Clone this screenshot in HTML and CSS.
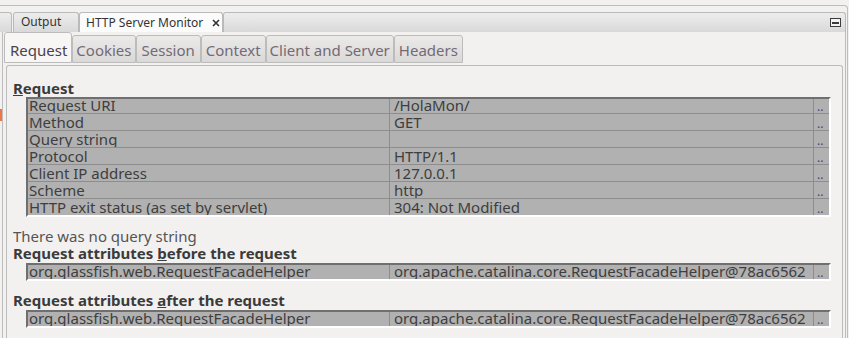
FILE: index.html
```html
<!DOCTYPE html>
<html lang="en">
<head>
  <meta charset="UTF-8">
  <meta name="viewport" content="width=device-width, initial-scale=1.0">
  <title>HTTP Server Monitor</title>
  <link rel="stylesheet" href="styles.css">
</head>
<body>

  <div class="frame">

    <!-- editor tab strip -->
    <div class="editor-tabs">
      <div class="etab stub"></div>
      <div class="etab output">Output</div>
      <div class="etab active">
        HTTP Server Monitor
        <svg class="close" width="8" height="8" viewBox="0 0 8 8">
          <path d="M1 1 L7 7 M7 1 L1 7" stroke="#333" stroke-width="1.6" fill="none"/>
        </svg>
      </div>
      <div class="etab-fill">
        <svg class="minimize" width="11" height="9" viewBox="0 0 11 9">
          <rect x="0.5" y="0.5" width="10" height="8" fill="#f4f4f4" stroke="#3b3b3b"/>
          <rect x="2" y="4" width="7" height="2" fill="#3b3b3b"/>
        </svg>
      </div>
    </div>

    <div class="workspace">
      <div class="gutter"><span class="mark"></span></div>

      <div class="editor-body">
        <!-- monitor tabs -->
        <div class="subtabs">
          <div class="subtab active">Request</div>
          <div class="subtab narrow">Cookies</div>
          <div class="subtab wide">Session</div>
          <div class="subtab">Context</div>
          <div class="subtab narrow">Client and Server</div>
          <div class="subtab">Headers</div>
        </div>

        <div class="subpanel">
          <div class="section-title"><u>R</u>equest</div>
          <div class="grid">
            <div class="row"><div class="cell">Request URI</div><div class="cell">/HolaMon/</div><div class="more">..</div></div>
            <div class="row"><div class="cell">Method</div><div class="cell">GET</div><div class="more">..</div></div>
            <div class="row"><div class="cell">Query string</div><div class="cell"></div><div class="more">..</div></div>
            <div class="row"><div class="cell">Protocol</div><div class="cell">HTTP/1.1</div><div class="more">..</div></div>
            <div class="row"><div class="cell">Client IP address</div><div class="cell">127.0.0.1</div><div class="more">..</div></div>
            <div class="row"><div class="cell">Scheme</div><div class="cell">http</div><div class="more">..</div></div>
            <div class="row"><div class="cell">HTTP exit status (as set by servlet)</div><div class="cell">304: Not Modified</div><div class="more">..</div></div>
          </div>

          <p class="note">There was no query string</p>

          <div class="section-title">Request attributes <u>b</u>efore the request</div>
          <div class="grid">
            <div class="row"><div class="cell">org.glassfish.web.RequestFacadeHelper</div><div class="cell">org.apache.catalina.core.RequestFacadeHelper@78ac6562</div><div class="more">..</div></div>
          </div>

          <div class="section-title">Request attributes <u>a</u>fter the request</div>
          <div class="grid">
            <div class="row"><div class="cell">org.glassfish.web.RequestFacadeHelper</div><div class="cell">org.apache.catalina.core.RequestFacadeHelper@78ac6562</div><div class="more">..</div></div>
          </div>
        </div>
      </div>
    </div>

  </div>

</body>
</html>
```

FILE: styles.css
```css
body, html {
  margin: 0;
  height: 100%;
  overflow: hidden;
  background: #f2f1f0;
  font-family: "Noto Sans", sans-serif;
  color: #4c4c4c;
}

.frame {
  box-sizing: border-box;
  height: calc(100% - 5px);
  margin-top: 5px;
  margin-right: 1px;
  padding-top: 6px;
  border-top: 1px solid #bdbdbd;
  border-right: 1px solid #bdbdbd;
  border-top-right-radius: 4px;
  display: flex;
  flex-direction: column;
}

/* editor tab strip */
.editor-tabs {
  display: flex;
  height: 20px;
  margin-right: 1px;
}

.etab {
  box-sizing: border-box;
  height: 20px;
  border: 1px solid #bababa;
  border-bottom: none;
  border-radius: 3px 3px 0 0;
  background: linear-gradient(#ededed, #d9d9d9);
  font-size: 12px;
  line-height: 17px;
  color: #333;
  white-space: nowrap;
}

.etab.stub {
  width: 12px;
  border-left: none;
  border-radius: 0 3px 0 0;
}

.etab.output {
  width: 66px;
  margin-left: 1px;
  padding-left: 7px;
}

.etab.active {
  width: 144px;
  padding-left: 6px;
  background: #fbfbfb;
  display: flex;
  align-items: center;
  gap: 9px;
}

.close {
  margin-top: 1px;
}

.etab-fill {
  flex: 1;
  box-sizing: border-box;
  height: 20px;
  border: 1px solid #bababa;
  border-bottom: none;
  border-radius: 3px 3px 0 0;
  background: linear-gradient(#ededed, #d9d9d9);
  display: flex;
  justify-content: flex-end;
  align-items: center;
  padding-right: 4px;
}

/* body */
.workspace {
  flex: 1;
  display: flex;
}

.gutter {
  width: 2px;
}

.mark {
  display: block;
  width: 2px;
  height: 12px;
  margin-top: 77px;
  background: #ef7543;
}

.editor-body {
  flex: 1;
  display: flex;
  flex-direction: column;
  margin-right: 1px;
  border-left: 1px solid #bdbdbd;
  border-right: 1px solid #bdbdbd;
}

.subtabs {
  display: flex;
  align-items: flex-end;
  height: 31px;
  padding-left: 1px;
}

.subtab {
  box-sizing: border-box;
  height: 28px;
  padding: 6px 4px 0;
  border: 1px solid #bcbcbc;
  border-radius: 3px 3px 0 0;
  background: linear-gradient(#ebeae9, #dad9d8);
  font-size: 15px;
  line-height: 17px;
  color: #736a76;
  white-space: nowrap;
}

.subtab.narrow {
  padding-left: 3px;
  padding-right: 3px;
}

.subtab.wide {
  padding-left: 5px;
  padding-right: 5px;
}

.subtab.active {
  height: 31px;
  padding: 9px 4px 0 5px;
  background: #f7f6f5;
  color: #4a424c;
}

.subpanel {
  flex: 1;
  margin: 2px 2px 0 3px;
  padding: 14px 0 0 6px;
  border-top: 1px solid #bcbcbc;
  border-left: 1px solid #bcbcbc;
  border-right: 1px solid #bcbcbc;
  border-radius: 3px 3px 0 0;
}

.section-title {
  font-size: 15px;
  font-weight: bold;
  line-height: 17px;
  color: #3b3b3b;
}

.section-title u {
  text-underline-offset: 1px;
}

.grid {
  margin: 0 11px 11px 13px;
  background: #b1b1b1;
  border-top: 2px solid #6f6f6f;
  border-left: 2px solid #6f6f6f;
  border-right: 2px solid #fff;
  border-bottom: 2px solid #fff;
}

.note + .section-title + .grid,
.grid + .section-title + .grid {
  margin-top: 1px;
}

.row {
  display: grid;
  grid-template-columns: 362px 424px 14px;
  height: 17px;
  border-bottom: 1px solid #8d8d8d;
  box-sizing: border-box;
}

.row:first-child {
  height: 15px;
}

.row:last-child {
  border-bottom: none;
  height: 16px;
}

.row:first-child:last-child {
  height: 14px;
}

.cell {
  overflow: hidden;
  white-space: nowrap;
  padding-left: 1px;
  border-right: 1px solid #8d8d8d;
  font-size: 15px;
  line-height: 17px;
  color: #3e3e3e;
}

.cell + .cell {
  padding-left: 4px;
}

.row:first-child .cell {
  line-height: 12px;
}

.more {
  display: flex;
  align-items: flex-end;
  padding-left: 3px;
  font-size: 12px;
  line-height: 12px;
  color: #4d4170;
  overflow: hidden;
}

.note {
  margin: 0;
  font-size: 15px;
  line-height: 17px;
  color: #555;
}
```
